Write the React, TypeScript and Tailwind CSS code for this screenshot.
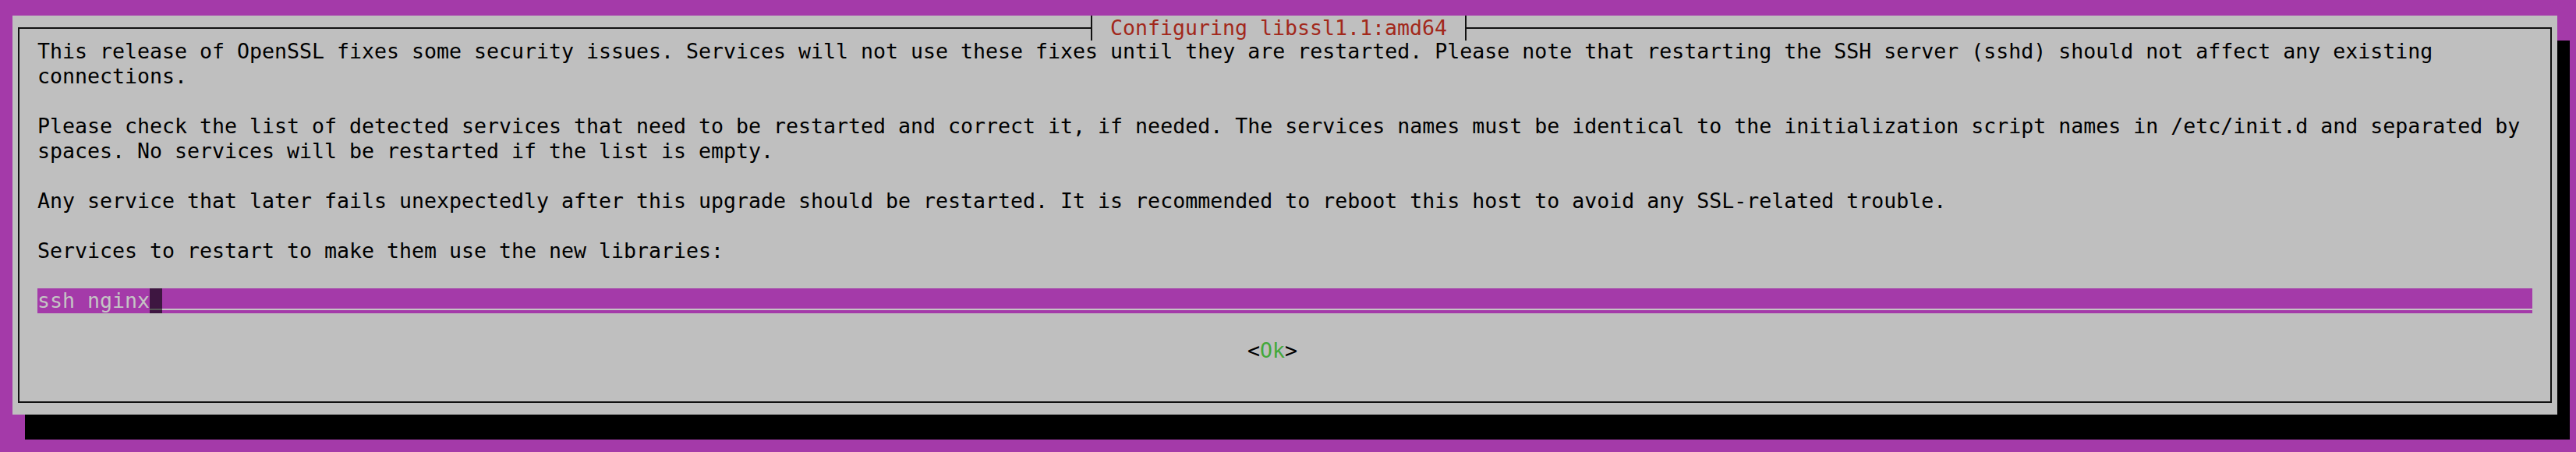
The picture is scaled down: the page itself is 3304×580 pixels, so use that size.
const lines: (string | null)[] = [
  'This release of OpenSSL fixes some security issues. Services will not use these fixes until they are restarted. Please note that restarting the SSH server (sshd) should not affect any existing',
  'connections.',
  null,
  'Please check the list of detected services that need to be restarted and correct it, if needed. The services names must be identical to the initialization script names in /etc/init.d and separated by',
  'spaces. No services will be restarted if the list is empty.',
  null,
  'Any service that later fails unexpectedly after this upgrade should be restarted. It is recommended to reboot this host to avoid any SSL-related trouble.',
  null,
  'Services to restart to make them use the new libraries:',
  null,
]

export default function App() {
  return (
    <div
      className="w-[3304px] h-[580px] bg-[#a43aa9] pt-[20px] pl-[16px] text-[26.58px] leading-[32px] text-black overflow-hidden"
      style={{ fontFamily: '"DejaVu Sans Mono", "Liberation Mono", monospace' }}
    >
      {/* dialog with its shadow */}
      <div className="w-[3264px] h-[512px] bg-[#bfbfbf] pt-[15px] pb-[15px] px-[7px] shadow-[16px_32px_0_0_#000]">
        <div className="relative h-full border-2 border-[#111] pt-[13px] px-[23px]">
          {/* title */}
          <div className="absolute top-[-17px] left-[1374px] h-[32px] w-[482px] bg-[#bfbfbf] border-x-2 border-[#111] pl-[23px] text-[#a2281b] whitespace-pre">
            Configuring libssl1.1:amd64
          </div>

          {lines.map((l, i) => (
            <div key={i} className="h-[32px] whitespace-pre">
              {l ?? ''}
            </div>
          ))}

          {/* entry field */}
          <div className="flex h-[32px] bg-[#a43aa9] text-[#c4c4c4]">
            <span className="whitespace-pre">ssh nginx</span>
            <div className="w-[16px] h-full bg-[#3e1641] flex flex-col justify-end pb-[4px]">
              <div className="h-[2px] bg-[#555]" />
            </div>
            <div className="flex-1 h-full flex flex-col justify-end pb-[4px]">
              <div className="h-[2px] bg-[#c4c4c4]" />
            </div>
          </div>

          <div className="h-[32px]" />

          <div className="h-[32px] pl-[1552px] whitespace-pre">
            &lt;<span className="text-[#43a83b]">Ok</span>&gt;
          </div>
        </div>
      </div>
    </div>
  )
}
